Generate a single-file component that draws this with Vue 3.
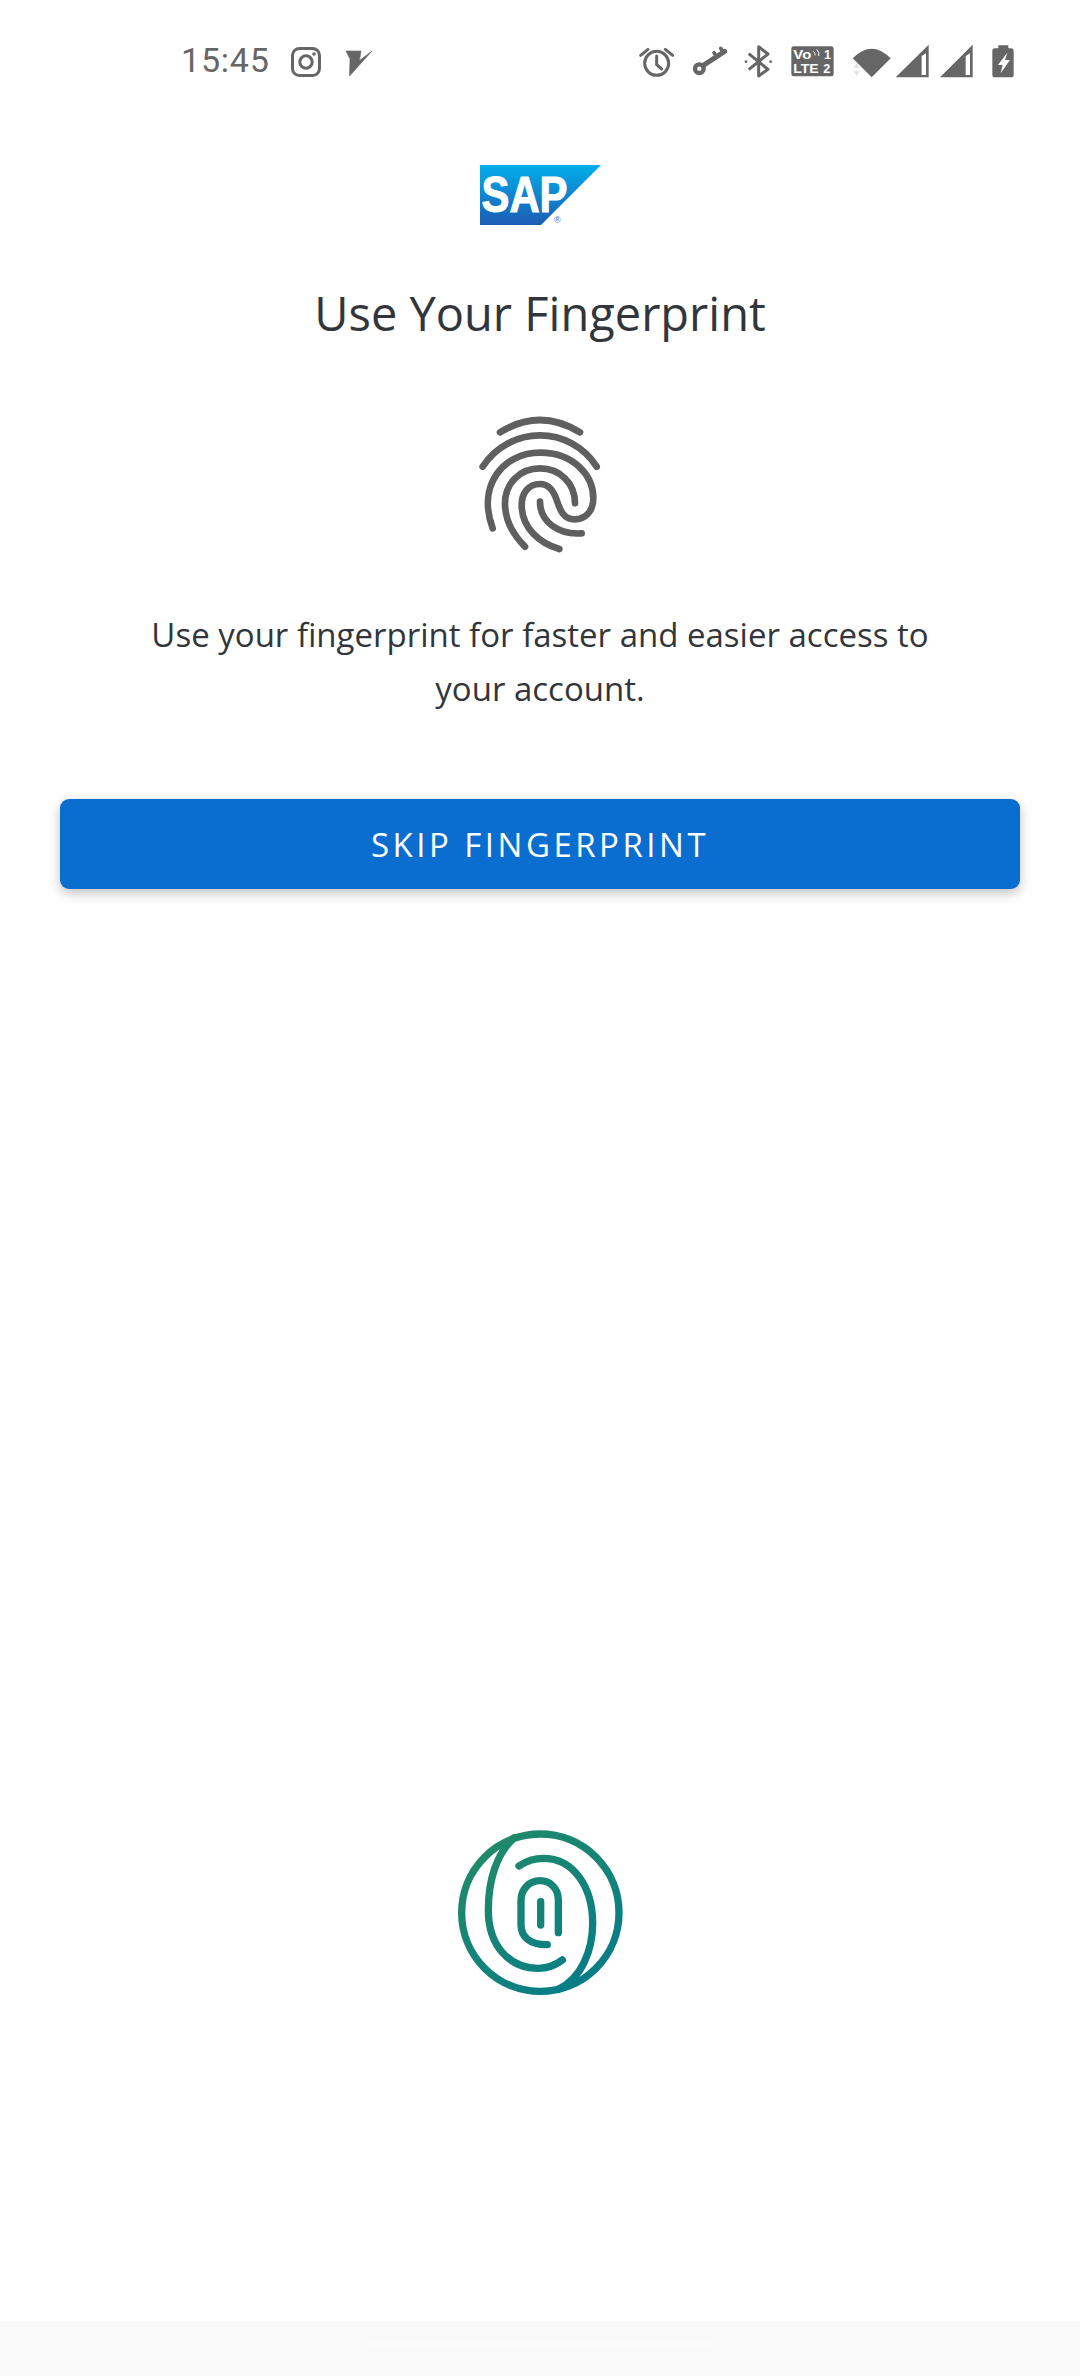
<script setup>
const title = 'Use Your Fingerprint'
</script>

<template>
  <div class="page">
    <header class="status">
      <span class="time">15:45</span>
      <svg class="ig" viewBox="0 0 30 30" width="30" height="30" fill="none" stroke="#666">
        <rect x="1.500" y="1.500" width="27" height="27" rx="7" stroke-width="3" />
        <circle cx="15" cy="15" r="6.200" stroke-width="3" />
        <circle cx="23" cy="7" r="1.800" fill="#666" stroke="none" />
      </svg>
      <svg class="vee" viewBox="0 0 28 26" width="28" height="26">
        <path d="M1 1H16L14.500 10.500L27 1L4.500 26L5 9Z" fill="#666" stroke="#666" stroke-width="0.6" />
      </svg>
      <svg class="right" viewBox="0 0 1200 240" width="400" height="80" fill="#666">
        <g fill="none" stroke="#666" stroke-width="9" stroke-linecap="round">
          <circle cx="110" cy="130" r="36" />
          <path d="M110 108V134L125 147M62 106L84 88M136 88L158 106" />
        </g>
        <g fill="none" stroke="#666" stroke-linecap="round" stroke-linejoin="round">
          <circle cx="238" cy="146" r="13" stroke-width="13" />
          <path d="M250 136L314 94" stroke-width="15" />
          <path d="M290 110L282 98M310 97L302 85" stroke-width="11" />
        </g>
        <path d="M386 101L444 148L416 168V80L444 102L386 149" fill="none" stroke="#666" stroke-width="9" stroke-linejoin="round" />
        <circle cx="378" cy="125" r="4" />
        <circle cx="452" cy="125" r="4" />
        <rect x="514" y="79" width="127" height="90" rx="7" />
        <g class="volte" fill="#fff">
          <text x="520" y="118" textLength="54" lengthAdjust="spacingAndGlyphs">Vo</text>
          <text x="612" y="118">1</text>
          <text x="520" y="160" textLength="76" lengthAdjust="spacingAndGlyphs">LTE</text>
          <text x="610" y="160">2</text>
        </g>
        <path d="M580 94Q587 100 585 106M590 88Q600 98 596 108" fill="none" stroke="#fff" stroke-width="3" />
        <path d="M698 115Q755 58 812 115L755 172Z" />
        <path d="M710 130L720 144H700ZM700 153H720L710 168Z" fill="#e2e2e2" />
        <path fill-rule="evenodd" d="M827 172L926 74V172ZM905 108V165H918V100Z" />
        <path fill-rule="evenodd" d="M960 172L1058 74V172ZM1037 108V165H1050V100Z" />
        <path fill-rule="evenodd" d="M1135 76H1165V85H1173Q1181 85 1181 93V165Q1181 172 1173 172H1125Q1117 172 1117 165V93Q1117 85 1125 85H1135ZM1162 98L1134 135H1148L1142 160L1170 120H1155Z" />
      </svg>
    </header>

    <main class="content">
      <svg class="sap" viewBox="0 0 122 62" width="122" height="62">
        <defs>
          <linearGradient id="sapfill" x1="0" y1="0" x2="0" y2="1">
            <stop offset="0" stop-color="#03aeea" />
            <stop offset="1" stop-color="#1c5cb5" />
          </linearGradient>
        </defs>
        <path d="M1 0H122L62 60H1Z" fill="url(#sapfill)" />
        <text class="sap-word" x="2.500" y="47" textLength="86" lengthAdjust="spacingAndGlyphs" fill="#fff" stroke="#fff" stroke-width="1">SAP</text>
        <text class="sap-reg" x="75" y="58" fill="#3a6fb8">®</text>
      </svg>

      <h1 class="title">{{ title }}</h1>

      <svg class="print" viewBox="0 0 480 510" width="160" height="170" fill="none" stroke="#5f5f5f" stroke-width="20" stroke-linecap="round">
        <path d="M120 97Q240 23 360 97" />
        <path d="M68 200C150 75 330 75 410 200" />
        <path d="M98 385C50 255 130 158 240 158C340 158 400 225 400 295C400 335 375 358 345 358C310 358 300 330 290 300C280 270 265 252 240 252C205 252 185 280 185 315C185 385 240 430 298 447" />
        <path d="M195 440C150 395 135 355 135 310C135 250 180 205 240 205C300 205 345 250 345 310" />
        <path d="M240 305C240 365 295 405 365 400" />
      </svg>

      <p class="desc">Use your fingerprint for faster and easier access to<br />your account.</p>

      <button class="skip" type="button">SKIP FINGERPRINT</button>

      <svg class="badge" viewBox="0 0 600 600" width="200" height="200" fill="none" stroke="url(#greenfill)" stroke-width="22" stroke-linecap="round">
        <defs>
          <linearGradient id="greenfill" gradientUnits="userSpaceOnUse" x1="120" y1="90" x2="480" y2="530">
            <stop offset="0" stop-color="#218a67" />
            <stop offset="1" stop-color="#067c8a" />
          </linearGradient>
        </defs>
        <circle cx="301" cy="308" r="236" />
        <path d="M222 84C170 130 145 210 145 300C145 410 210 475 295 475C325 475 347 465 367 450" />
        <path d="M237 168C260 152 285 145 310 145C400 145 458 230 458 340C458 420 425 505 355 538" />
        <path d="M355 368V270C355 235 330 212 300 212C268 212 243 238 243 270V345C243 380 270 405 322 404" />
        <path d="M302 275V345" />
      </svg>
    </main>

    <footer class="nav"><span class="pill"></span></footer>
  </div>
</template>

<style scoped>
.page {
  width: 1080px;
  height: 2376px;
  display: flex;
  flex-direction: column;
  background: #fff;
  overflow: hidden;
}
.status {
  height: 120px;
  flex: none;
  display: flex;
  align-items: center;
  padding: 0 0 0 181px;
  box-sizing: border-box;
  position: relative;
}
.time {
  font: 400 34px Roboto, sans-serif;
  color: #666;
  letter-spacing: 0.8px;
  width: 110px;
}
.ig { margin-top: 4px; }
.vee { margin-left: 24px; margin-top: 5px; }
.right { position: absolute; left: 620px; top: 20px; }
.content {
  flex: 1;
  display: flex;
  flex-direction: column;
  align-items: center;
  padding-top: 45px;
}
.sap { display: block; }
.sap-word { font: 700 50px "Liberation Sans", sans-serif; }
.sap-reg { font: 400 9px "Liberation Sans", sans-serif; }
.volte text { font: 700 38px "Liberation Sans", sans-serif; }
.title {
  margin: 54px 0 0;
  font: 400 47px/64px "Open Sans", sans-serif;
  color: #32363a;
}
.print { margin-top: 55px; display: block; }
.desc {
  margin: 38px 0 0;
  font: 400 33px/54px "Open Sans", sans-serif;
  color: #32363a;
  text-align: center;
}
.skip {
  margin-top: 83px;
  width: 960px;
  height: 90px;
  flex: none;
  border: 0;
  border-radius: 9px;
  background: #0a6ed1;
  color: #fff;
  font: 400 33px "Open Sans", sans-serif;
  letter-spacing: 3.500px;
  box-shadow: 0 4px 12px rgba(0, 0, 0, 0.25);
}
.badge { margin-top: 921px; display: block; flex: none; }
.nav {
  flex: none;
  height: 55px;
  background: #f9f9f9;
  display: flex;
  justify-content: center;
  align-items: center;
}
.pill {
  width: 343px;
  height: 9px;
  margin-bottom: 9px;
  border-radius: 5px;
  background: #fbfbfb;
}
</style>
